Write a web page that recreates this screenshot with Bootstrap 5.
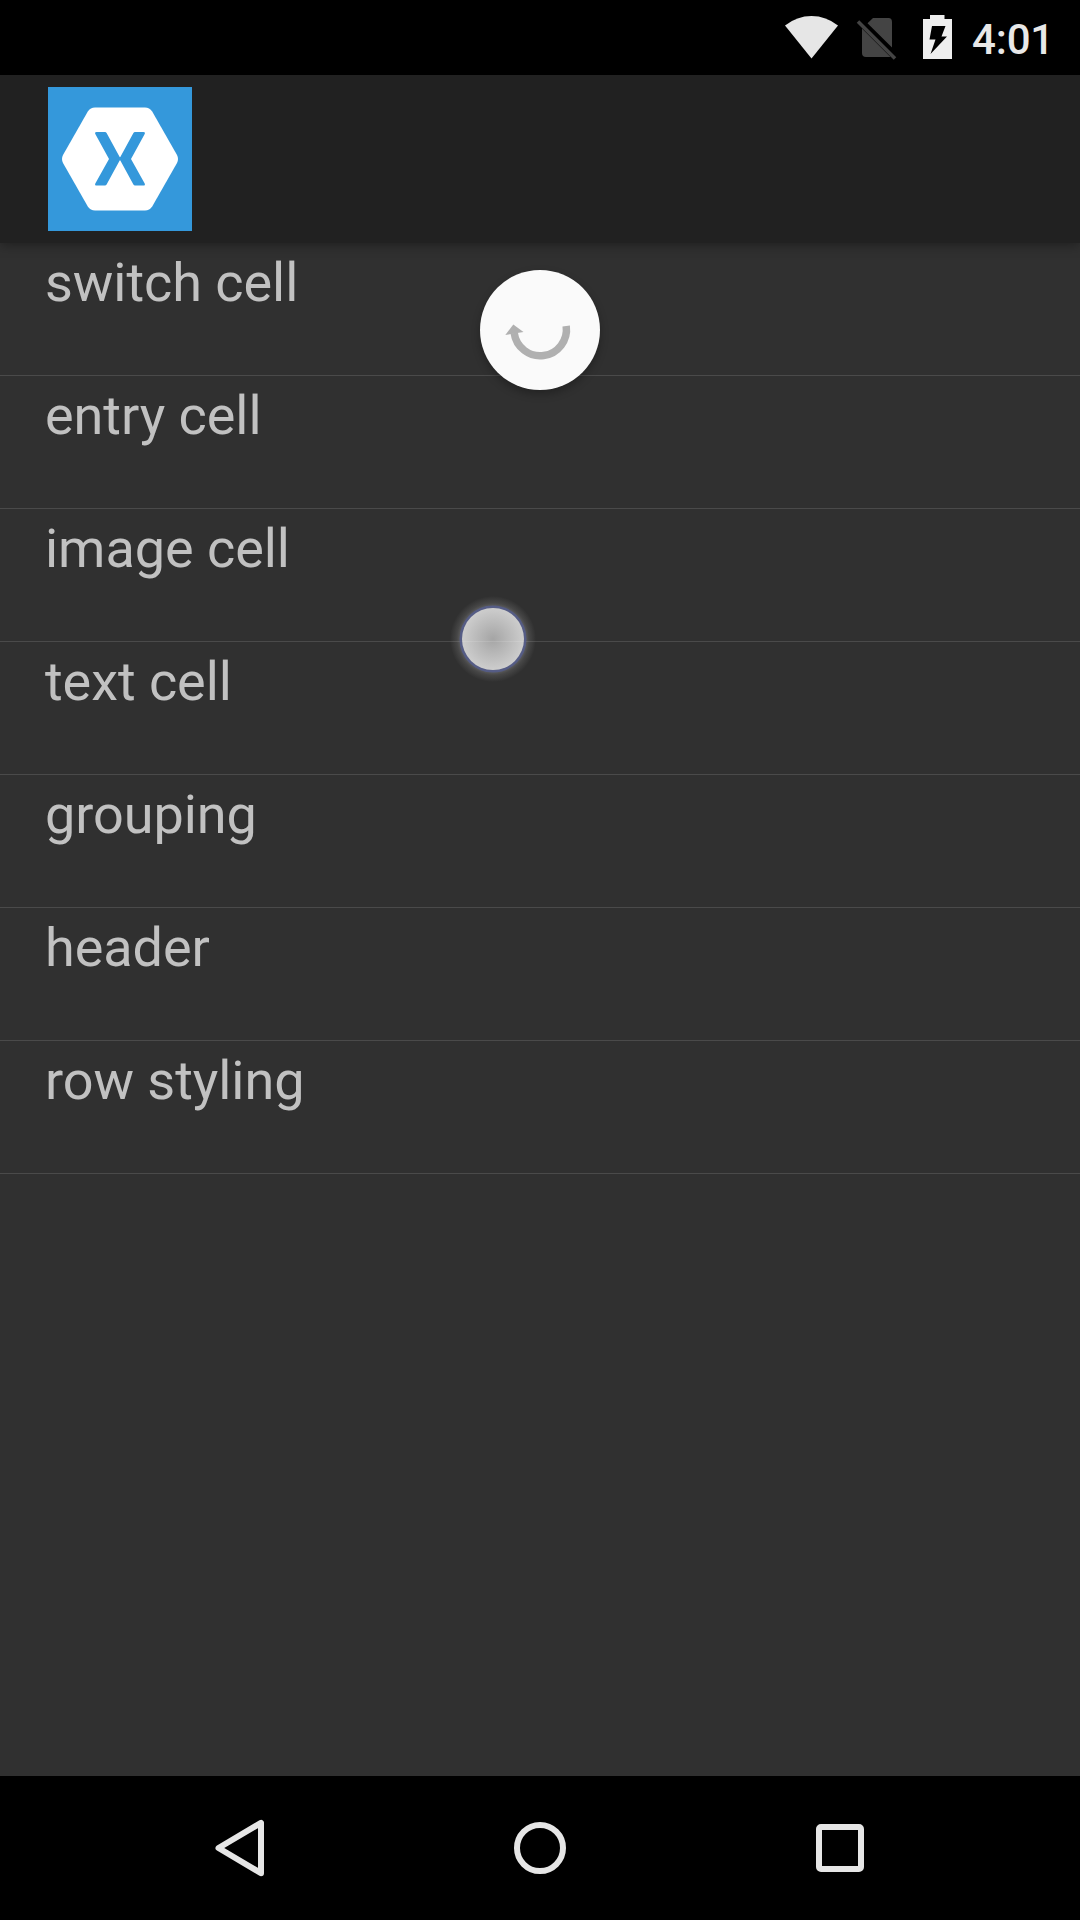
<!DOCTYPE html>
<html lang="en">
<head>
<meta charset="utf-8">
<meta name="viewport" content="width=device-width, initial-scale=1">
<title>List</title>
<link href="https://cdn.jsdelivr.net/npm/bootstrap@5.3.0/dist/css/bootstrap.min.css" rel="stylesheet">
<style>
  body { font-family: Roboto, sans-serif; background: #303030; }
  .screen { width: 1080px; height: 1920px; }
  .status-bar { height: 75px; padding-right: 26px; background: #000; color: #e8e8e8; }
  .clock { font-size: 42px; line-height: 50px; font-weight: 500; letter-spacing: -.2px; margin-left: 20px; padding-top: 5px; }
  .app-bar { height: 168px; padding-left: 48px; background: #212121; box-shadow: 0 2px 11px rgba(0,0,0,.36); z-index: 1; }
  .cells { --bs-list-group-bg: #303030; --bs-list-group-color: #c1c1c1; --bs-list-group-border-color: #4a4a4a; }
  .cells .list-group-item { height: 133px; padding: 8px 45px 0; font-size: 54px; line-height: 64px; letter-spacing: -.05px; border-width: 0 0 1px !important; }
  .refresh { width: 120px; height: 120px; left: 480px; top: 27px; background: #fafafa; box-shadow: 0 4px 9px rgba(0,0,0,.28); }
  .touch { width: 120px; height: 120px; left: 433px; top: 336px; }
  .nav-keys { height: 144px; background: #000; padding: 0 90px; }
  svg { display: block; flex: none; }
</style>
</head>
<body>
<div class="screen d-flex flex-column overflow-hidden">
  <div class="status-bar d-flex justify-content-end align-items-center">
    <svg width="167" height="75" viewBox="785 0 167 75">
      <path d="M785 25.5Q797 16 811.5 16T838 25.5L811.5 58.5Z" fill="#e6e6e6"/>
      <path d="M867.5 23.2L873 18H888.500Q892 18 892 22V47.500ZM862 28.500L890.500 57H866Q862 57 862 53Z" fill="#444"/>
      <path d="M858 21.500L895 58.500" stroke="#444" stroke-width="3.600"/>
      <path d="M930 15H944.500V19H952V59H923V19H930Z" fill="#eee"/>
      <path d="M932 26H945.500L941.500 36.500H947L930.500 54L935.500 39.500H929.500Z" fill="#000"/>
    </svg>
    <div class="clock">4:01</div>
  </div>

  <header class="app-bar d-flex align-items-center position-relative">
    <svg width="144" height="144" viewBox="0 0 144 144">
      <path fill="#3498db" d="M0 0H144V144H0Z"/>
      <path fill="#fff" d="M47 20.500H97Q101.500 20.500 104.200 24.500L129 68Q131 72 129 76L104.200 119.500Q101.500 123.500 97 123.500H47Q42.500 123.500 39.800 119.500L15 76Q13 72 15 68L39.800 24.500Q42.500 20.500 47 20.500Z"/>
      <path fill="#3498db" d="M48.500 45H57Q58 45 58.600 46L71.400 69.500Q72 71 72.600 69.500L85.400 46Q86 45 87 45H95.500Q97.500 45 96.700 47L83 72L96.700 96.500Q97.500 98.500 95.500 98.500H87Q86 98.500 85.400 97.500L72.600 74Q72 72.500 71.400 74L58.600 97.500Q58 98.500 57 98.500H48.500Q46.500 98.500 47.300 96.500L61 72L47.300 47Q46.500 45 48.500 45Z"/>
    </svg>
  </header>

  <main class="flex-grow-1 position-relative">
    <ul class="list-group list-group-flush cells">
      <li class="list-group-item">switch cell</li>
      <li class="list-group-item">entry cell</li>
      <li class="list-group-item">image cell</li>
      <li class="list-group-item">text cell</li>
      <li class="list-group-item">grouping</li>
      <li class="list-group-item">header</li>
      <li class="list-group-item">row styling</li>
    </ul>
    <div class="refresh position-absolute rounded-circle">
      <svg width="120" height="120" viewBox="0 0 120 120">
        <path d="M86.200 56A26.200 26.200 0 1 1 34.200 63" fill="none" stroke="#b0b0b0" stroke-width="7.500"/>
        <path d="M25.300 65L33.300 54.500L43.500 62Z" fill="#b0b0b0"/>
      </svg>
    </div>
    <svg class="touch position-absolute" viewBox="0 0 120 120">
      <defs>
        <radialGradient id="halo">
          <stop offset=".72" stop-color="#a0a0a0" stop-opacity=".5"/>
          <stop offset=".84" stop-color="#a0a0a0" stop-opacity=".2"/>
          <stop offset="1" stop-color="#a0a0a0" stop-opacity="0"/>
        </radialGradient>
        <radialGradient id="dot">
          <stop offset="0" stop-color="#a5a5a5"/>
          <stop offset="1" stop-color="#cdcdcd"/>
        </radialGradient>
      </defs>
      <circle cx="60" cy="60" r="43" fill="url(#halo)"/>
      <circle cx="60" cy="60" r="32" fill="none" stroke="#525b8e" stroke-width="3" stroke-opacity=".8"/>
      <circle cx="60" cy="60" r="31" fill="url(#dot)"/>
      <path d="M29 62.500H91" stroke="#fff" stroke-opacity=".12"/>
    </svg>
  </main>

  <nav class="nav-keys d-flex justify-content-around align-items-center">
    <svg width="72" height="72" viewBox="0 0 72 72" fill="none" stroke="#e6e6e6" stroke-width="6"><path stroke-linejoin="round" d="M14.500 36L57 10.800V61.200Z"/></svg>
    <svg width="72" height="72" viewBox="0 0 72 72" fill="none" stroke="#e6e6e6" stroke-width="6"><circle cx="36" cy="36" r="23"/></svg>
    <svg width="72" height="72" viewBox="0 0 72 72" fill="none" stroke="#e6e6e6" stroke-width="6"><rect x="15" y="15" width="42" height="42" rx="2"/></svg>
  </nav>
</div>
<script src="https://cdn.jsdelivr.net/npm/bootstrap@5.3.0/dist/js/bootstrap.bundle.min.js"></script>
</body>
</html>
